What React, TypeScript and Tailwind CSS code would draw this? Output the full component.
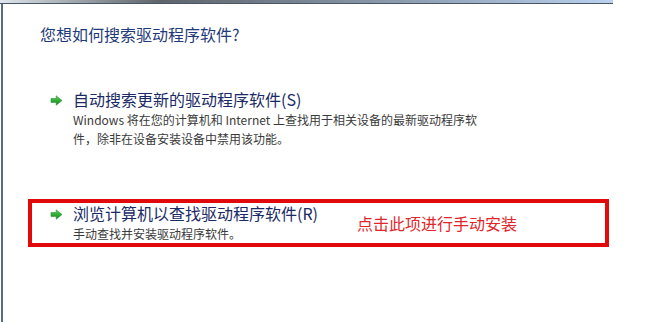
import React from "react";

function GreenArrow() {
  return (
    <svg width="13" height="11" viewBox="0 0 13 11" className="shrink-0">
      <defs>
        <linearGradient id="ga" x1="0" y1="0" x2="0" y2="1">
          <stop offset="0" stopColor="#6ad86a" />
          <stop offset="0.5" stopColor="#2fae35" />
          <stop offset="1" stopColor="#1a8a22" />
        </linearGradient>
      </defs>
      <path d="M1 3.6 H6.2 V0.8 L12 5.5 L6.2 10.2 V7.4 H1 Z" fill="url(#ga)" stroke="#2a8a2e" strokeWidth="0.6" />
    </svg>
  );
}

type Option = {
  title: string;
  lines: string[];
};

function CommandLink({ option }: { option: Option }) {
  return (
    <div className="flex">
      <div className="mt-[6px] w-[23px]">
        <GreenArrow />
      </div>
      <div>
        <div className="text-[16px] leading-[21px] text-[#1a2a66]">{option.title}</div>
        {option.lines.map((l) => (
          <div key={l} className="text-[12px] leading-[19px] text-[#3a3a3a]">
            {l}
          </div>
        ))}
      </div>
    </div>
  );
}

export default function App() {
  const auto: Option = {
    title: "自动搜索更新的驱动程序软件(S)",
    lines: [
      "Windows 将在您的计算机和 Internet 上查找用于相关设备的最新驱动程序软",
      "件，除非在设备安装设备中禁用该功能。",
    ],
  };
  const browse: Option = {
    title: "浏览计算机以查找驱动程序软件(R)",
    lines: ["手动查找并安装驱动程序软件。"],
  };

  return (
    <div
      className="h-[322px] w-[648px] overflow-hidden bg-white"
      style={{ fontFamily: '"Noto Sans CJK SC", "Noto Sans", sans-serif' }}
    >
      <div className="h-[4px] w-[613px] border-b border-[#4a5566] bg-gradient-to-r from-[#dfe6ee] via-[#5d646c] to-[#b9d2ef] [--tw-gradient-via-position:26%]" />
      <div className="ml-px h-[318px] border-l-2 border-[#5b6b82] pl-[25px] pt-[20px]">
        <h1 className="pl-[12px] text-[16px] font-normal leading-[20px] text-[#1f3a78]">
          您想如何搜索驱动程序软件?
        </h1>

        <div className="mt-[45px] pl-[22px]">
          <CommandLink option={auto} />
        </div>

        <div className="relative mt-[51px] h-[48px] w-[581px] border-4 border-[#e10a0a] pl-[18px]">
          <CommandLink option={browse} />
          <div className="absolute left-[325px] top-[10px] text-[16px] leading-[20px] text-[#e0262b]">
            点击此项进行手动安装
          </div>
        </div>
      </div>
    </div>
  );
}
